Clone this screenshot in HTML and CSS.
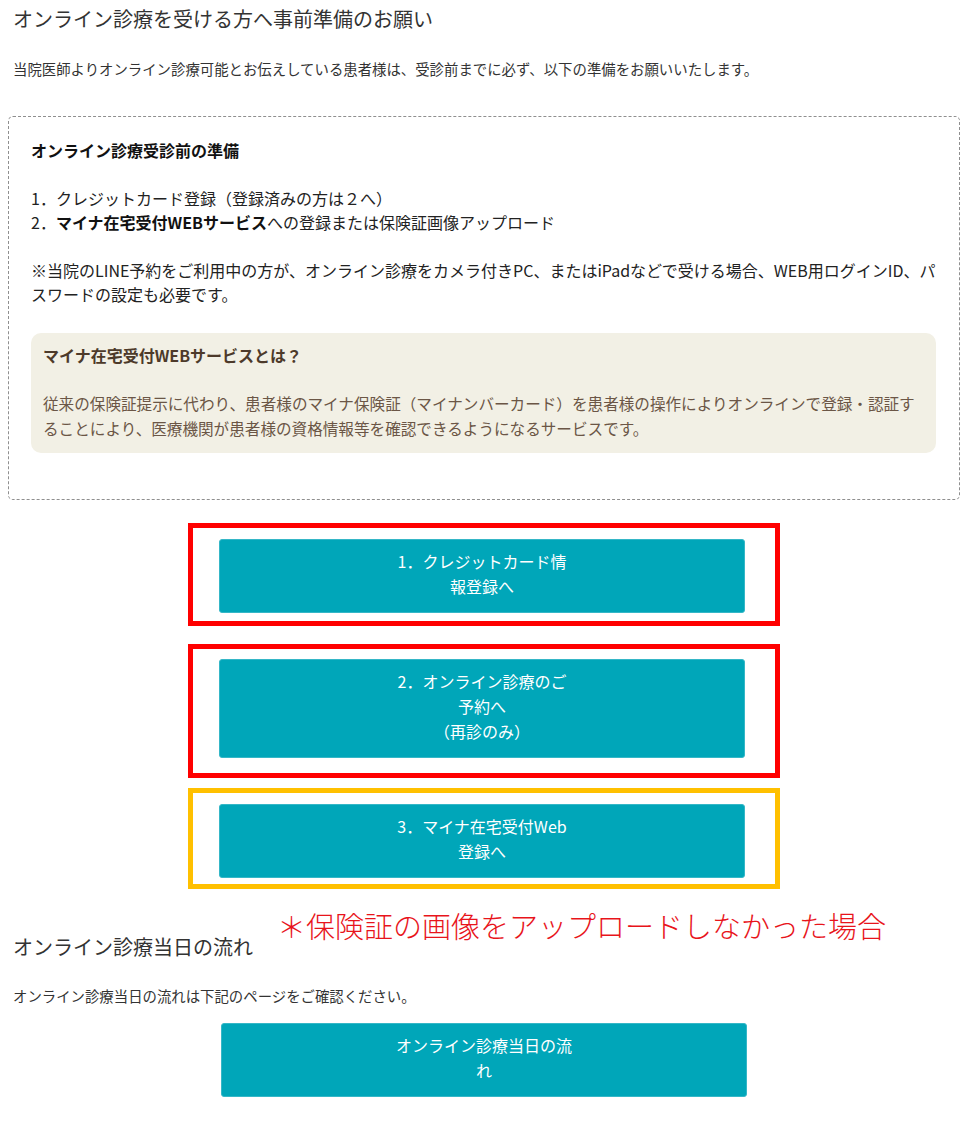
FILE: index.html
```html
<!DOCTYPE html>
<html lang="ja">
<head>
<meta charset="utf-8">
<title>オンライン診療を受ける方へ事前準備のお願い</title>
<link rel="stylesheet" href="styles.css">
</head>
<body>
<div class="page">
  <h1 class="title">オンライン診療を受ける方へ事前準備のお願い</h1>
  <p class="lead">当院医師よりオンライン診療可能とお伝えしている患者様は、受診前までに必ず、以下の準備をお願いいたします。</p>

  <div class="prep">
    <p class="prep-head">オンライン診療受診前の準備</p>
    <p class="prep-list">1．クレジットカード登録（登録済みの方は２へ）<br>2．<strong>マイナ在宅受付WEBサービス</strong>への登録または保険証画像アップロード</p>
    <p class="prep-note">※当院のLINE予約をご利用中の方が、オンライン診療をカメラ付きPC、またはiPadなどで受ける場合、WEB用ログインID、パスワードの設定も必要です。</p>
    <div class="about">
      <p class="about-head">マイナ在宅受付WEBサービスとは？</p>
      <p class="about-text">従来の保険証提示に代わり、患者様のマイナ保険証（マイナンバーカード）を患者様の操作によりオンラインで登録・認証することにより、医療機関が患者様の資格情報等を確認できるようになるサービスです。</p>
    </div>
  </div>

  <div class="frame frame-red frame-1">
    <a class="btn" href="#"><span class="btn-label">1．クレジットカード情報登録へ</span></a>
  </div>
  <div class="frame frame-red frame-2">
    <a class="btn" href="#"><span class="btn-label">2．オンライン診療のご予約へ<br>（再診のみ）</span></a>
  </div>
  <div class="frame frame-yellow frame-3">
    <a class="btn" href="#"><span class="btn-label">3．マイナ在宅受付Web登録へ</span></a>
  </div>

  <div class="flow">
    <p class="annot">＊保険証の画像をアップロードしなかった場合</p>
    <h2 class="flow-title">オンライン診療当日の流れ</h2>
    <p class="flow-text">オンライン診療当日の流れは下記のページをご確認ください。</p>
    <a class="btn btn-solo" href="#"><span class="btn-label">オンライン診療当日の流れ</span></a>
  </div>
</div>
</body>
</html>
```
FILE: styles.css
```css
html, body {
  margin: 0;
  padding: 0;
  background: #ffffff;
}
body {
  font-family: "Noto Sans CJK JP", "Noto Sans", sans-serif;
  color: #333333;
}
.page {
  padding: 0 10px 0 8px;
}
p { margin: 0; }

.title {
  margin: 4px 0 0 5px;
  font-size: 20px;
  line-height: 30px;
  font-weight: normal;
  color: #333333;
}
.lead {
  margin: 23px 0 0 5px;
  font-size: 14.4px;
  line-height: 24px;
  color: #333333;
}

.prep {
  margin-top: 35px;
  border: 1px dashed #8f8f8f;
  border-radius: 5px;
  padding: 21px 23px 46px 22px;
}
.prep-head {
  font-size: 16px;
  line-height: 24px;
  font-weight: bold;
  color: #111111;
}
.prep-list {
  margin-top: 24px;
  font-size: 16px;
  line-height: 24px;
  color: #222222;
}
.prep-list strong { color: #111111; }
.prep-note {
  margin-top: 24px;
  margin-right: -5px;
  font-size: 16px;
  line-height: 24px;
  color: #222222;
}
.about {
  margin-top: 27px;
  background: #f2f0e5;
  border-radius: 10px;
  padding: 10px 12px 12px 12px;
}
.about-head {
  font-size: 16px;
  line-height: 24px;
  font-weight: bold;
  color: #4d3a2a;
}
.about-text {
  margin-top: 24px;
  font-size: 15.6px;
  line-height: 25px;
  color: #6b5646;
}

.frame {
  box-sizing: border-box;
  width: 592px;
  margin: 0 auto;
  border: 5px solid #ff0000;
  padding-left: 26px;
  padding-right: 30px;
}
.frame-red { border-color: #ff0000; }
.frame-yellow { border-color: #ffc000; }
.frame-1 { margin-top: 23px; padding-top: 11px; padding-bottom: 8px; }
.frame-2 { margin-top: 18px; padding-top: 10px; padding-bottom: 15px; }
.frame-3 { margin-top: 10px; padding-top: 11px; padding-bottom: 6px; }

.btn {
  display: flex;
  justify-content: center;
  box-sizing: border-box;
  width: 526px;
  padding: 9px 0 13px;
  background: #00a6b9;
  border: 1px solid #35b7c7;
  border-radius: 3px;
  color: #ffffff;
  text-decoration: none;
  font-size: 16px;
  line-height: 25px;
  text-align: center;
}
.btn-label {
  display: block;
  max-width: 184px;
}

.flow {
  position: relative;
  margin-top: 43px;
}
.annot {
  position: absolute;
  left: 269px;
  top: -25px;
  font-size: 29px;
  line-height: 36px;
  font-weight: 300;
  color: #e8141b;
  white-space: nowrap;
}
.flow-title {
  margin: 0 0 0 5px;
  font-size: 20px;
  line-height: 30px;
  font-weight: normal;
  color: #333333;
}
.flow-text {
  margin: 22px 0 0 5px;
  font-size: 14.4px;
  line-height: 24px;
  color: #333333;
}
.btn-solo {
  margin: 15px auto 0;
}
```
